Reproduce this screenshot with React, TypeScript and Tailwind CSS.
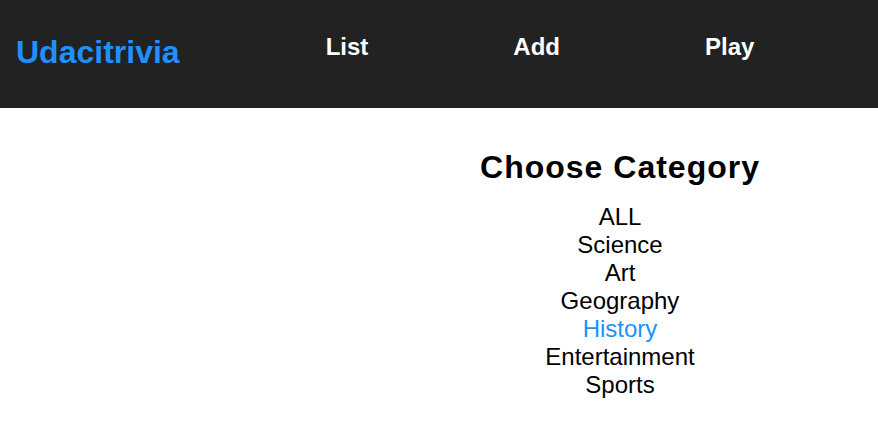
const navItems = [
  { label: "List", gap: "ml-[146px]" },
  { label: "Add", gap: "ml-[145px]" },
  { label: "Play", gap: "ml-[145px]" },
];

const categories = [
  "ALL",
  "Science",
  "Art",
  "Geography",
  "History",
  "Entertainment",
  "Sports",
];

export default function App() {
  const active = "History";

  return (
    <div className="min-h-[443px] w-full bg-white font-['Liberation_Sans',Arial,sans-serif]">
      <header className="flex h-[108px] items-start bg-[#222222] pl-4">
        <h1 className="mt-[32px] text-[32px] font-bold leading-[40px] text-[#1e90ff]">
          Udacitrivia
        </h1>
        {navItems.map((item) => (
          <h2
            key={item.label}
            className={`${item.gap} mt-[31px] cursor-pointer text-[24px] font-bold leading-[32px] text-white`}
          >
            {item.label}
          </h2>
        ))}
      </header>

      <main className="flex">
        <div className="w-[362px]" />
        <div className="flex flex-1 flex-col items-center pt-[39px]">
          <h2 className="text-[32px] font-bold leading-[40px] tracking-[1px] text-black">
            Choose Category
          </h2>
          <ul className="mt-[16px] flex flex-col items-center">
            {categories.map((cat) => (
              <li
                key={cat}
                className={`cursor-pointer text-[24px] leading-[28px] ${
                  cat === active ? "text-[#1e90ff]" : "text-black"
                }`}
              >
                {cat}
              </li>
            ))}
          </ul>
        </div>
      </main>
    </div>
  );
}
